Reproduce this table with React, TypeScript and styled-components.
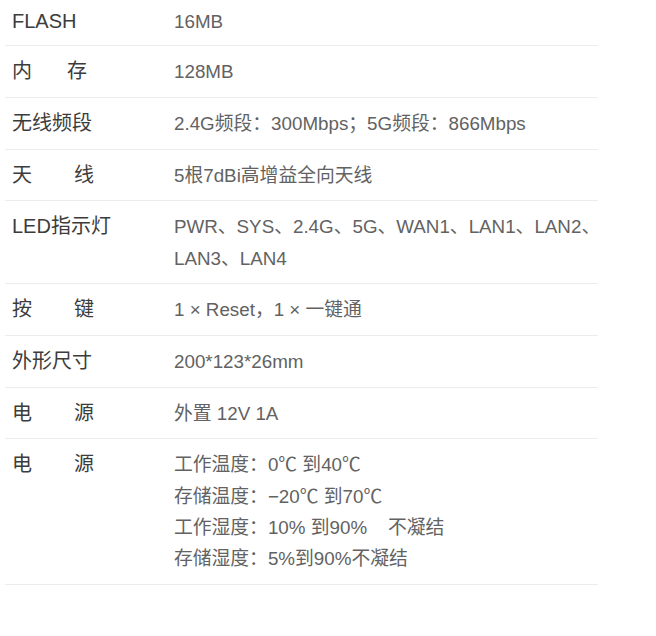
import React from "react";
import styled, { createGlobalStyle } from "styled-components";

const Global = createGlobalStyle`
  html, body { margin: 0; padding: 0; background: #ffffff; }
  body {
    font-family: "Liberation Sans", "Noto Sans CJK SC", sans-serif;
    -webkit-font-smoothing: antialiased;
  }
`;

const Page = styled.div`
  width: 656px;
  height: 636px;
  background: #fff;
  padding: 0 0 0 5px;
  box-sizing: border-box;
`;

const Table = styled.div`
  width: 593px;
  display: flex;
  flex-direction: column;
`;

const Row = styled.div<{ $first?: boolean }>`
  display: grid;
  grid-template-columns: 162px 1fr;
  padding: ${(p) => (p.$first ? "6px 0 8px" : "10px 0 9.5px")};
  border-bottom: 1px solid #ededed;
`;

const Label = styled.div<{ $gap?: number }>`
  padding-left: 7px;
  font-size: 20px;
  line-height: 31px;
  color: #3c3c3c;
  display: flex;
  column-gap: ${(p) => p.$gap ?? 0}px;
  white-space: nowrap;
`;

const Value = styled.div`
  padding-left: 7px;
  font-size: 18.8px;
  line-height: 31.2px;
  color: #626262;
  margin-right: -16px;
`;

const Line = styled.div`
  white-space: pre;
`;

type Spec = { label: string[]; gap?: number; value: string[] };

const specs: Spec[] = [
  { label: ["FLASH"], value: ["16MB"] },
  { label: ["内", "存"], gap: 35, value: ["128MB"] },
  { label: ["无线频段"], value: ["2.4G频段：300Mbps；5G频段：866Mbps"] },
  { label: ["天", "线"], gap: 42, value: ["5根7dBi高增益全向天线"] },
  {
    label: ["LED指示灯"],
    value: ["PWR、SYS、2.4G、5G、WAN1、LAN1、LAN2、", "LAN3、LAN4"],
  },
  { label: ["按", "键"], gap: 42, value: ["1 × Reset，1 × 一键通"] },
  { label: ["外形尺寸"], value: ["200*123*26mm"] },
  { label: ["电", "源"], gap: 42, value: ["外置 12V 1A"] },
  {
    label: ["电", "源"],
    gap: 42,
    value: [
      "工作温度：0℃ 到40℃",
      "存储温度：−20℃ 到70℃",
      "工作湿度：10% 到90%    不凝结",
      "存储湿度：5%到90%不凝结",
    ],
  },
];

export default function App() {
  return (
    <Page>
      <Global />
      <Table>
        {specs.map((s, i) => (
          <Row key={i} $first={i === 0}>
            <Label $gap={s.gap}>
              {s.label.map((c, j) => (
                <span key={j}>{c}</span>
              ))}
            </Label>
            <Value>
              {s.value.map((v, j) => (
                <Line key={j}>{v}</Line>
              ))}
            </Value>
          </Row>
        ))}
      </Table>
    </Page>
  );
}
